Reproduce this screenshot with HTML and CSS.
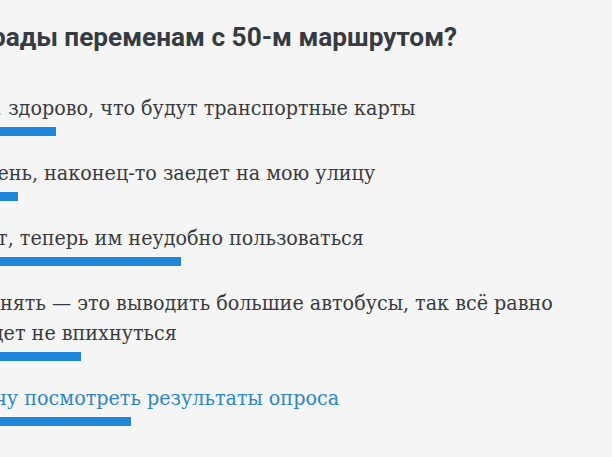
FILE: index.html
```html
<!DOCTYPE html>
<html lang="ru">
<head>
<meta charset="utf-8">
<title>Опрос</title>
<link rel="stylesheet" href="styles.css">
</head>
<body>
<section class="poll">
  <h2 class="poll-title">Вы рады переменам с 50-м маршрутом?</h2>
  <ul class="poll-answers">
    <li class="answer">
      <span class="answer-text">Да, здорово, что будут транспортные карты</span>
      <span class="answer-bar" style="width: 87px"></span>
    </li>
    <li class="answer">
      <span class="answer-text">Очень, наконец-то заедет на мою улицу</span>
      <span class="answer-bar" style="width: 49px"></span>
    </li>
    <li class="answer">
      <span class="answer-text">Нет, теперь им неудобно пользоваться</span>
      <span class="answer-bar" style="width: 212px"></span>
    </li>
    <li class="answer">
      <span class="answer-text">Менять — это выводить большие автобусы, так всё равно будет не впихнуться</span>
      <span class="answer-bar" style="width: 112px"></span>
    </li>
    <li class="answer">
      <a class="answer-text answer-link" href="#">Хочу посмотреть результаты опроса</a>
      <span class="answer-bar" style="width: 162px"></span>
    </li>
  </ul>
</section>
</body>
</html>
```

FILE: styles.css
```css
html, body {
  margin: 0;
  padding: 0;
  background: #ffffff;
  overflow: hidden;
}

.poll {
  margin-left: -31px;
  padding: 20px 0 9px 0;
  width: 643px;
  background: #f5f5f5;
}

.poll-title {
  margin: 0 0 0 -23px;
  font-family: Roboto, "Noto Sans", sans-serif;
  font-weight: 700;
  font-size: 26.2px;
  line-height: 34px;
  color: #363b42;
  white-space: nowrap;
}

.poll-answers {
  list-style: none;
  margin: 39px 0 0;
  padding: 0;
  width: 600px;
}

.answer {
  display: flex;
  flex-direction: column;
  align-items: flex-start;
  margin-bottom: 22px;
}

.answer-text {
  font-family: "DejaVu Serif Condensed", "DejaVu Serif", serif;
  font-stretch: condensed;
  font-size: 21.3px;
  line-height: 30px;
  color: #393b3e;
  text-decoration: none;
}

.answer-link {
  color: #2e87c4;
}

.answer-bar {
  display: block;
  height: 9px;
  margin-top: 4px;
  background: #1f86d9;
}
```
